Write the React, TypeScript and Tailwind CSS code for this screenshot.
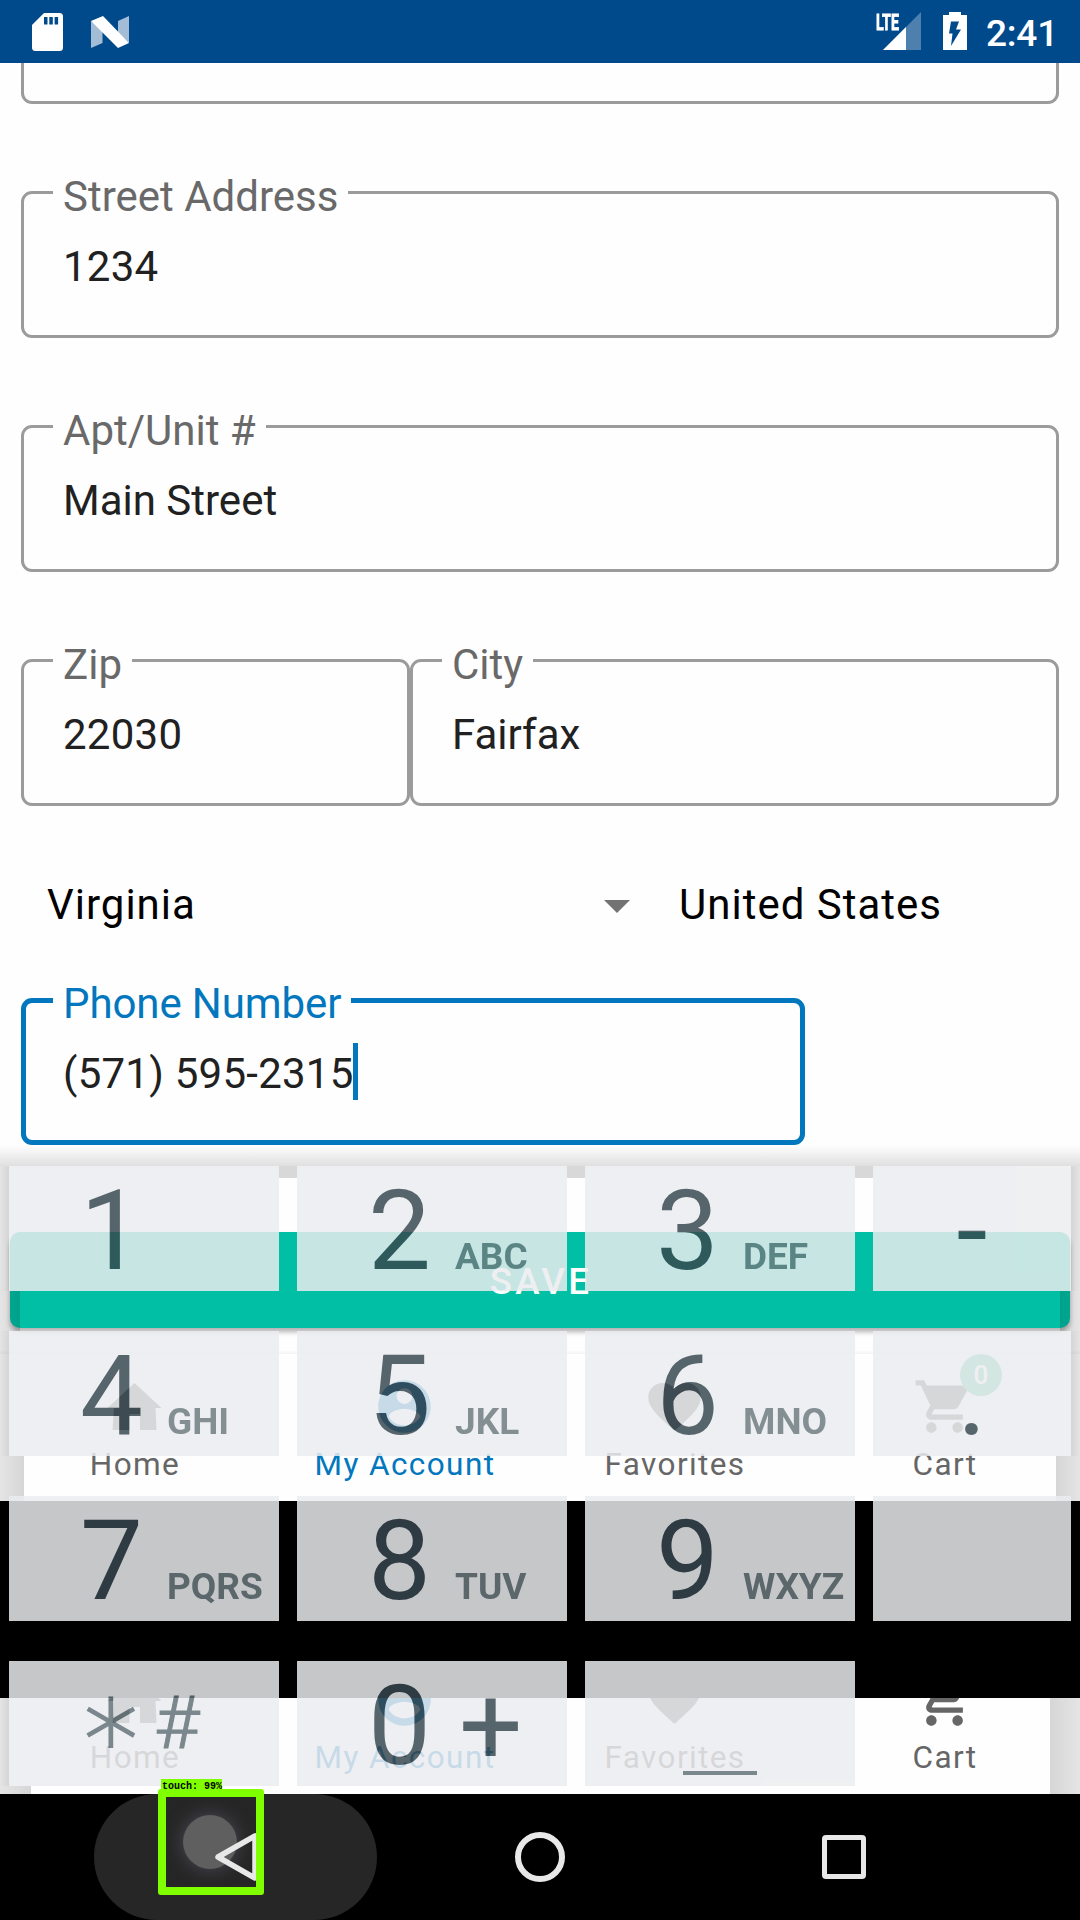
import React from "react";

type FieldProps = { label: string; value: string; className: string; focused?: boolean; numeric?: boolean };

function Field({ label, value, className, focused = false, numeric = false }: FieldProps) {
  return (
    <div
      className={`relative h-[147px] shrink-0 rounded-[11px] ${
        focused ? "border-[5px] border-[#0277bd]" : "border-[3px] border-[#9b9b9b]"
      } ${className}`}
    >
      <span
        className={`absolute bg-[#fefefe] px-[10px] text-[42px] leading-[42px] whitespace-nowrap ${
          focused
            ? "-top-[20px] left-[27px] tracking-[-0.1px] text-[#0277bd]"
            : "-top-[18px] left-[29px] text-[#696969]"
        }`}
      >
        {label}
      </span>
      <div
        className={`flex h-[58px] items-center text-[42px] leading-[42px] whitespace-nowrap text-[#212121] ${
          focused ? "mt-[39px] ml-[37px]" : "mt-[44px] ml-[39px]"
        } ${numeric ? "tracking-[0.25px]" : ""}`}
      >
        <span className={focused ? "pt-[5px]" : ""}>{value}</span>
        {focused && <span className="-ml-px h-[57px] w-[5px] bg-[#0277bd]" />}
      </div>
    </div>
  );
}

function HomeIcon() {
  return (
    <svg viewBox="0 0 63 63" className="-ml-px size-[63px] fill-current">
      <path d="M31.500 8L58.500 33H52.500L53.500 55H37V39H26.500V55H9.500L11 33H4.500Z" />
    </svg>
  );
}
function MaterialIcon({ d }: { d: string }) {
  return (
    <svg viewBox="0 0 24 24" className="-ml-px size-[63px] fill-current">
      <path d={d} />
    </svg>
  );
}
const ACCOUNT =
  "M12 2C6.480 2 2 6.480 2 12s4.480 10 10 10 10-4.480 10-10S17.520 2 12 2zm0 3c1.660 0 3 1.340 3 3s-1.340 3-3 3-3-1.340-3-3 1.340-3 3-3zm0 14.200c-2.500 0-4.710-1.280-6-3.220.03-1.990 4-3.080 6-3.080 1.990 0 5.970 1.090 6 3.080-1.290 1.940-3.500 3.220-6 3.220z";
const HEART =
  "M12 21.350l-1.450-1.320C5.400 15.360 2 12.280 2 8.500 2 5.420 4.420 3 7.500 3c1.740 0 3.410.810 4.500 2.090C13.090 3.810 14.760 3 16.500 3 19.580 3 22 5.420 22 8.500c0 3.780-3.400 6.860-8.550 11.540L12 21.350z";
const CART =
  "M7 18c-1.100 0-1.990.9-1.990 2S5.900 22 7 22s2-.9 2-2-.9-2-2-2zM1 2v2h2l3.600 7.590-1.350 2.450c-.16.28-.25.610-.25.960 0 1.100.9 2 2 2h12v-2H7.420c-.14 0-.25-.11-.25-.25l.03-.12.900-1.630h7.450c.750 0 1.410-.41 1.750-1.030l3.580-6.490c.08-.14.12-.31.12-.48 0-.55-.45-1-1-1H5.210l-.94-2H1zm16 16c-1.100 0-1.990.9-1.990 2s.890 2 1.990 2 2-.9 2-2-.9-2-2-2z";

function BottomNav({ badge = false }: { badge?: boolean }) {
  const item = "relative flex flex-col items-center pt-[21px]";
  const label = "mt-[11px] text-[31.5px] leading-[32px] tracking-[1.4px] whitespace-nowrap";
  return (
    <nav className="grid h-[147px] w-full shrink-0 grid-cols-4 bg-[#fefefe] text-[#666666]">
      <div className={item}>
        <HomeIcon />
        <span className={label}>Home</span>
      </div>
      <div className={`${item} text-[#0277bd]`}>
        <MaterialIcon d={ACCOUNT} />
        <span className={label}>My Account</span>
      </div>
      <div className={item}>
        <MaterialIcon d={HEART} />
        <span className={label}>Favorites</span>
      </div>
      <div className={item}>
        <MaterialIcon d={CART} />
        <span className={label}>Cart</span>
        {badge && (
          <span className="absolute top-0 left-[150px] flex size-[42px] items-center justify-center rounded-full bg-[#55c29c] text-[26px] font-medium text-white">
            0
          </span>
        )}
      </div>
    </nav>
  );
}

function Key({ digit, letters }: { digit: string; letters?: string }) {
  return (
    <div className="flex h-[125px] items-baseline bg-[#ecedf0] pt-[9px] pl-[71px] whitespace-nowrap text-[#37474f]">
      <span className="w-[63px] text-[112px] leading-[112px]">{digit}</span>
      <span className="ml-[24px] text-[37px] leading-[37px] font-bold text-[#6d7b80]">{letters}</span>
    </div>
  );
}

function Keypad() {
  const blank = "h-[125px] bg-[#ecedf0] text-[#37474f]";
  return (
    <div className="absolute top-[1166px] left-[9px] grid grid-cols-[270px_270px_270px_198px] gap-x-[18px] gap-y-[40px] opacity-[0.84]">
      <Key digit="1" />
      <Key digit="2" letters="ABC" />
      <Key digit="3" letters="DEF" />
      <div className={`${blank} flex justify-center pt-[9px] text-[112px] leading-[112px]`}>-</div>
      <Key digit="4" letters="GHI" />
      <Key digit="5" letters="JKL" />
      <Key digit="6" letters="MNO" />
      <div className={`${blank} flex justify-center pt-[9px] text-[112px] leading-[112px]`}>.</div>
      <Key digit="7" letters="PQRS" />
      <Key digit="8" letters="TUV" />
      <Key digit="9" letters="WXYZ" />
      <div className={blank} />
      <div className="flex h-[125px] items-start bg-[#ecedf0] pl-[71px] text-[#627178]">
        <span className="mt-[26px] ml-px w-[60px] text-center font-['DejaVu_Sans'] text-[108px] leading-[108px] font-extralight [-webkit-text-stroke:2.2px_#627178]">
          *
        </span>
        <span className="mt-[26px] ml-[13px] origin-left scale-x-[1.07] text-[73px] leading-[73px] font-light [-webkit-text-stroke:1px_#627178]">
          #
        </span>
      </div>
      <div className={`${blank} flex pt-[9px] pl-[71px] text-[112px] leading-[112px]`}>
        <span className="w-[63px]">0</span>
        <span className="ml-[28px]">+</span>
      </div>
      <div className={`${blank} flex items-end pb-[11px] pl-[98px]`}>
        <span className="h-[4px] w-[74px] bg-[#627178]" />
      </div>
    </div>
  );
}

function KeypadShadow() {
  const left = "absolute left-0 bg-linear-to-r from-black/10 to-black/16";
  const right = "absolute right-0 bg-linear-to-l from-black/10 to-black/16";
  const gap = "absolute top-[1166px] h-[12px] w-[18px] bg-black/15";
  return (
    <>
      <div className="absolute top-[1145px] left-0 h-[21px] w-full bg-linear-to-b from-black/0 to-black/12" />
      <div className={`${gap} left-[279px]`} />
      <div className={`${gap} left-[567px]`} />
      <div className={`${gap} left-[855px]`} />
      <div className={`${left} top-[1166px] h-[125px] w-[9px]`} />
      <div className={`${left} top-[1291px] h-[40px] w-[20px]`} />
      <div className={`${left} top-[1331px] h-[125px] w-[9px]`} />
      <div className={`${left} top-[1456px] h-[45px] w-[24px]`} />
      <div className={`${left} top-[1698px] h-[88px] w-[9px]`} />
      <div className={`${left} top-[1786px] h-[8px] w-[31px]`} />
      <div className={`${right} top-[1166px] h-[125px] w-[9px]`} />
      <div className={`${right} top-[1291px] h-[40px] w-[20px]`} />
      <div className={`${right} top-[1331px] h-[125px] w-[9px]`} />
      <div className={`${right} top-[1456px] h-[45px] w-[24px]`} />
      <div className={`${right} top-[1698px] h-[96px] w-[30px]`} />
    </>
  );
}

function StatusBar() {
  return (
    <header className="flex h-[63px] shrink-0 items-start bg-[#004a8c] text-white">
      <svg viewBox="0 0 31 38" className="mt-[13px] ml-[32px] h-[38px] w-[31px]">
        <path d="M12 0H27.500Q31 0 31 3.500V34.500Q31 38 27.500 38H3.500Q0 38 0 34.500V12Z" fill="#fff" />
        <path d="M12 4h3.500v7.500H12zM17.300 4h3.500v7.500h-3.500zM22.600 4h3.500v7.500h-3.500z" fill="#004a8c" />
      </svg>
      <svg viewBox="0 0 38 32" className="mt-[15.500px] ml-[28px] h-[32px] w-[38px]">
        <path d="M0 5L11.500 14V27L0 32Z" fill="#a3bdd7" />
        <path d="M27 5L38 0V27L27 17Z" fill="#a3bdd7" />
        <path d="M0 5L12 0L38 27L27 32Z" fill="#fff" />
      </svg>
      <div className="relative ml-auto h-[63px] w-[46px]">
        <svg viewBox="0 0 38 38" className="absolute top-[12px] left-[8px] size-[38px]">
          <path d="M38 0V38H0Z" fill="#4d80af" />
          <path d="M23 15V38H0Z" fill="#fff" />
        </svg>
        <span className="absolute top-[12px] left-px origin-left scale-x-[0.660] text-[21.500px] leading-[22px] font-bold [-webkit-text-stroke:0.8px_#fff]">
          LTE
        </span>
      </div>
      <svg viewBox="0 0 24 38" className="mt-[12px] ml-[22px] h-[38px] w-[24px]">
        <path d="M6 0H18V3H24V38H0V3H6Z" fill="#fff" />
        <path d="M8 9.500H16L13 17.500H18L8 34L9.500 21.500H6Z" fill="#004a8c" />
      </svg>
      <span className="mt-[15px] mr-[22px] ml-[19px] text-[37px] leading-[37px] font-medium tracking-[-0.2px]">2:41</span>
    </header>
  );
}

function SystemNav() {
  return (
    <footer className="relative h-[126px] shrink-0 bg-black">
      <div className="absolute top-0 left-[94px] h-[126px] w-[283px] rounded-full bg-[#262626]" />
      <div className="absolute top-[21px] left-[183px] size-[54px] rounded-full bg-[#5f5f5f] shadow-[0_0_15px_3px_#414149] blur-[0.5px]" />
      <div className="flex h-[126px] items-center">
        <svg viewBox="0 0 50 50" className="relative ml-[212px] size-[50px]">
          <path d="M6 25L43 4V46Z" fill="none" stroke="#e8e8e8" strokeWidth="5.500" strokeLinejoin="round" />
        </svg>
        <span className="ml-[253px] size-[50px] rounded-full border-[6px] border-[#e8e8e8]" />
        <span className="ml-[257px] size-[44px] rounded-[4px] border-[5px] border-[#e8e8e8]" />
      </div>
      <div className="absolute -top-[5px] left-[158px] size-[106px] rounded-[3px] border-[8px] border-[#80ff00]" />
      <div className="absolute -top-[15px] left-[161px] h-[13px] w-[61px] bg-[#80ff00] pt-px pl-px font-['Liberation_Mono'] text-[10px] leading-[14px] font-bold whitespace-nowrap text-black">
        touch: 99%
      </div>
    </footer>
  );
}

export default function App() {
  return (
    <div className="relative flex h-[1920px] w-[1080px] flex-col overflow-hidden bg-[#fefefe] font-['Roboto',sans-serif]">
      <StatusBar />
      <main className="flex h-[1291px] shrink-0 flex-col">
        <div className="mx-[21px] h-[41px] shrink-0 rounded-b-[11px] border-[3px] border-t-0 border-[#9b9b9b]" />
        <Field label="Street Address" value="1234" className="mx-[21px] mt-[87px]" numeric />
        <Field label="Apt/Unit #" value="Main Street" className="mx-[21px] mt-[87px]" />
        <div className="mx-[21px] mt-[87px] flex">
          <Field label="Zip" value="22030" className="w-[389px]" numeric />
          <Field label="City" value="Fairfax" className="w-[649px]" />
        </div>
        <div className="flex h-[192px] items-center pt-[6px] text-[42px] leading-[42px] tracking-[1px] text-black">
          <span className="ml-[47px] w-[557px]">Virginia</span>
          <svg viewBox="0 0 26 13" className="mt-[2px] -mr-px h-[13px] w-[26px]">
            <path d="M0 0H26L13 13Z" fill="#737373" />
          </svg>
          <span className="ml-[50px]">United States</span>
        </div>
        <Field label="Phone Number" value="(571) 595-2315" className="ml-[21px] w-[784px]" focused numeric />
        <button className="mx-[10px] mt-[87px] flex h-[96px] shrink-0 items-center justify-center rounded-[10px] bg-[#00bfa5] pt-[3px] pl-[2px] text-[36.750px] font-medium tracking-[3.200px] text-white shadow-[0_4px_5px_rgba(0,0,0,0.3)]">
          SAVE
        </button>
        <div className="mt-auto h-[4px] bg-linear-to-b from-black/0 to-black/4" />
      </main>
      <BottomNav badge />
      <div className="h-[197px] shrink-0 bg-black" />
      <div className="flex h-[96px] shrink-0 flex-col justify-end overflow-hidden">
        <BottomNav />
      </div>
      <KeypadShadow />
      <Keypad />
      <SystemNav />
    </div>
  );
}
